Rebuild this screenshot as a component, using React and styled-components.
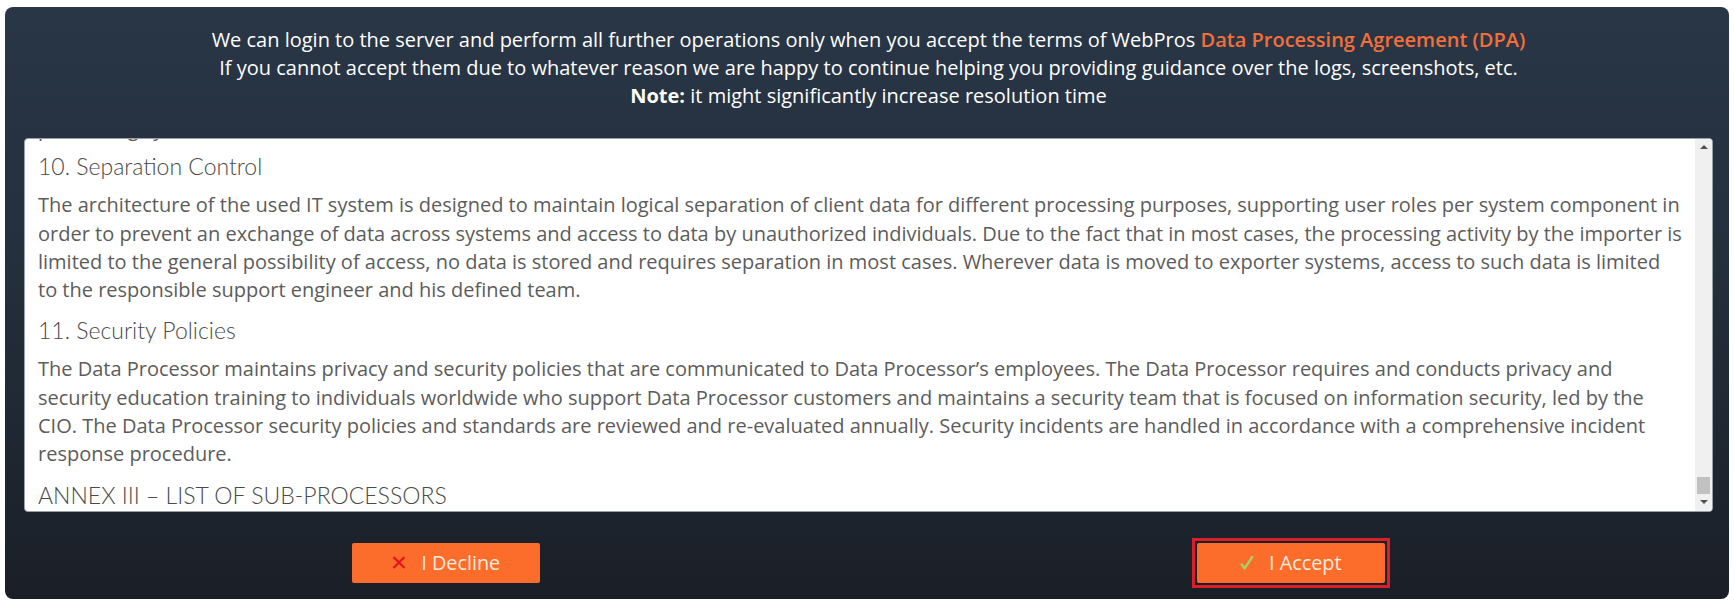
import React from 'react';
import styled, { createGlobalStyle, css } from 'styled-components';

const GlobalStyle = createGlobalStyle`
  html, body {
    margin: 0;
    padding: 0;
    background: #ffffff;
  }
  body {
    font-family: "Open Sans", "Liberation Sans", sans-serif;
  }
`;

const Panel = styled.section`
  box-sizing: border-box;
  width: 1724px;
  height: 592px;
  margin: 7px 5px 0 5px;
  padding: 19px 16px 0 19px;
  border-radius: 8px;
  background: linear-gradient(to bottom, #293646 0%, #242f3c 45%, #1a1f27 100%);
  display: flex;
  flex-direction: column;
`;

const Notice = styled.div`
  text-align: center;
  color: #ffffff;
  font-size: 20px;
  line-height: 28.2px;
`;

const NoticeLine = styled.p`
  margin: 0;
`;

const Highlight = styled.span`
  color: #f36f3a;
  font-weight: 600;
`;

const Strong = styled.strong`
  font-weight: 700;
`;

const DocBox = styled.div`
  box-sizing: border-box;
  height: 374px;
  margin-top: 27px;
  border: 1px solid #98a0a8;
  border-radius: 4px;
  background: #ffffff;
  display: flex;
  overflow: hidden;
`;

const DocText = styled.div`
  flex: 1;
  min-width: 0;
  overflow: hidden;
  padding: 0 13px 1px 13px;
  display: flex;
  flex-direction: column;
  justify-content: flex-end;
`;

const SectionTitle = styled.h4`
  flex-shrink: 0;
  margin: 0 0 10px 0;
  font-family: Lato, "Open Sans", sans-serif;
  font-weight: 300;
  font-size: 23px;
  line-height: 30px;
  color: #4a4a4a;
  ${p => p.$last && css`margin-bottom: 0;`}
`;

const Paragraph = styled.p`
  flex-shrink: 0;
  margin: 0 0 ${p => (p.$tight ? '8px' : '11px')} 0;
  font-size: 20px;
  line-height: 28.3px;
  color: #5c5c5c;
`;

const ScrollTrack = styled.div`
  width: 17px;
  flex-shrink: 0;
  background: #f0f0f0;
  display: flex;
  flex-direction: column;
  align-items: center;
`;

const ScrollArrow = styled.div`
  width: 17px;
  height: 17px;
  display: flex;
  align-items: center;
  justify-content: center;

  &::before {
    content: '';
    width: 0;
    height: 0;
    border-left: 4px solid transparent;
    border-right: 4px solid transparent;
    ${p => p.$down
      ? css`border-top: 4px solid #505050;`
      : css`border-bottom: 4px solid #505050;`}
  }
`;

const ScrollSpace = styled.div`
  flex: 1;
`;

const ScrollThumb = styled.div`
  width: 13px;
  height: 17px;
  background: #c1c1c1;
`;

const Actions = styled.div`
  margin-top: 31px;
  display: grid;
  grid-template-columns: 1fr 1fr;
  justify-items: center;
  align-items: center;
`;

const FocusFrame = styled.div`
  margin: -5px;
  padding: 2px;
  border: 3px solid #d81f2a;
  display: flex;
`;

const ActionButton = styled.button`
  box-sizing: border-box;
  width: 188px;
  height: 40px;
  padding: 0;
  border: none;
  border-radius: 2px;
  background: #fc6d2b;
  color: #fdeadb;
  font-family: "Open Sans", "Liberation Sans", sans-serif;
  font-size: 19.8px;
  display: flex;
  align-items: center;
  justify-content: center;
  gap: 15px;
  cursor: pointer;
  outline: none;
`;

function CrossIcon() {
  return (
    <svg width="14" height="13" viewBox="0 0 14 13">
      <path d="M1.5 1 L12.5 12 M12.5 1 L1.5 12" stroke="#e3141c" strokeWidth="2.2" fill="none" />
    </svg>
  );
}

function CheckIcon() {
  return (
    <svg width="14" height="15" viewBox="0 0 14 15">
      <path d="M1.2 8.6 L4.6 13.4 L12.8 1.2" stroke="#a2d667" strokeWidth="2.3" fill="none" strokeLinejoin="round" />
    </svg>
  );
}

export default function App() {
  return (
    <>
      <GlobalStyle />
      <Panel>
        <Notice>
          <NoticeLine>
            We can login to the server and perform all further operations only when you accept the terms of WebPros{' '}
            <Highlight>Data Processing Agreement (DPA)</Highlight>
          </NoticeLine>
          <NoticeLine>
            If you cannot accept them due to whatever reason we are happy to continue helping you providing guidance over the logs, screenshots, etc.
          </NoticeLine>
          <NoticeLine>
            <Strong>Note:</Strong> it might significantly increase resolution time
          </NoticeLine>
        </Notice>

        <DocBox>
          <DocText>
            <SectionTitle>9. Availability Control</SectionTitle>
            <Paragraph $tight>
              Personal data is protected against accidental destruction or loss by regular backups, and only by the
              people authorized by the responsible support engineer, as they apply to the processing systems,
            </Paragraph>
            <SectionTitle>10. Separation Control</SectionTitle>
            <Paragraph>
              The architecture of the used IT system is designed to maintain logical separation of client data for
              different processing purposes, supporting user roles per system component in order to prevent an exchange
              of data across systems and access to data by unauthorized individuals. Due to the fact that in most cases,
              the processing activity by the importer is limited to the general possibility of access, no data is stored
              and requires separation in most cases. Wherever data is moved to exporter systems, access to such data is
              limited to the responsible support engineer and his defined team.
            </Paragraph>
            <SectionTitle>11. Security Policies</SectionTitle>
            <Paragraph>
              The Data Processor maintains privacy and security policies that are communicated to Data Processor’s
              employees. The Data Processor requires and conducts privacy and security education training to individuals
              worldwide who support Data Processor customers and maintains a security team that is focused on information
              security, led by the CIO. The Data Processor security policies and standards are reviewed and re-evaluated
              annually. Security incidents are handled in accordance with a comprehensive incident response procedure.
            </Paragraph>
            <SectionTitle $last>ANNEX III – LIST OF SUB-PROCESSORS</SectionTitle>
          </DocText>
          <ScrollTrack>
            <ScrollArrow />
            <ScrollSpace />
            <ScrollThumb />
            <ScrollArrow $down />
          </ScrollTrack>
        </DocBox>

        <Actions>
          <ActionButton type="button">
            <CrossIcon />
            <span>I Decline</span>
          </ActionButton>
          <FocusFrame>
            <ActionButton type="button">
              <CheckIcon />
              <span>I Accept</span>
            </ActionButton>
          </FocusFrame>
        </Actions>
      </Panel>
    </>
  );
}
